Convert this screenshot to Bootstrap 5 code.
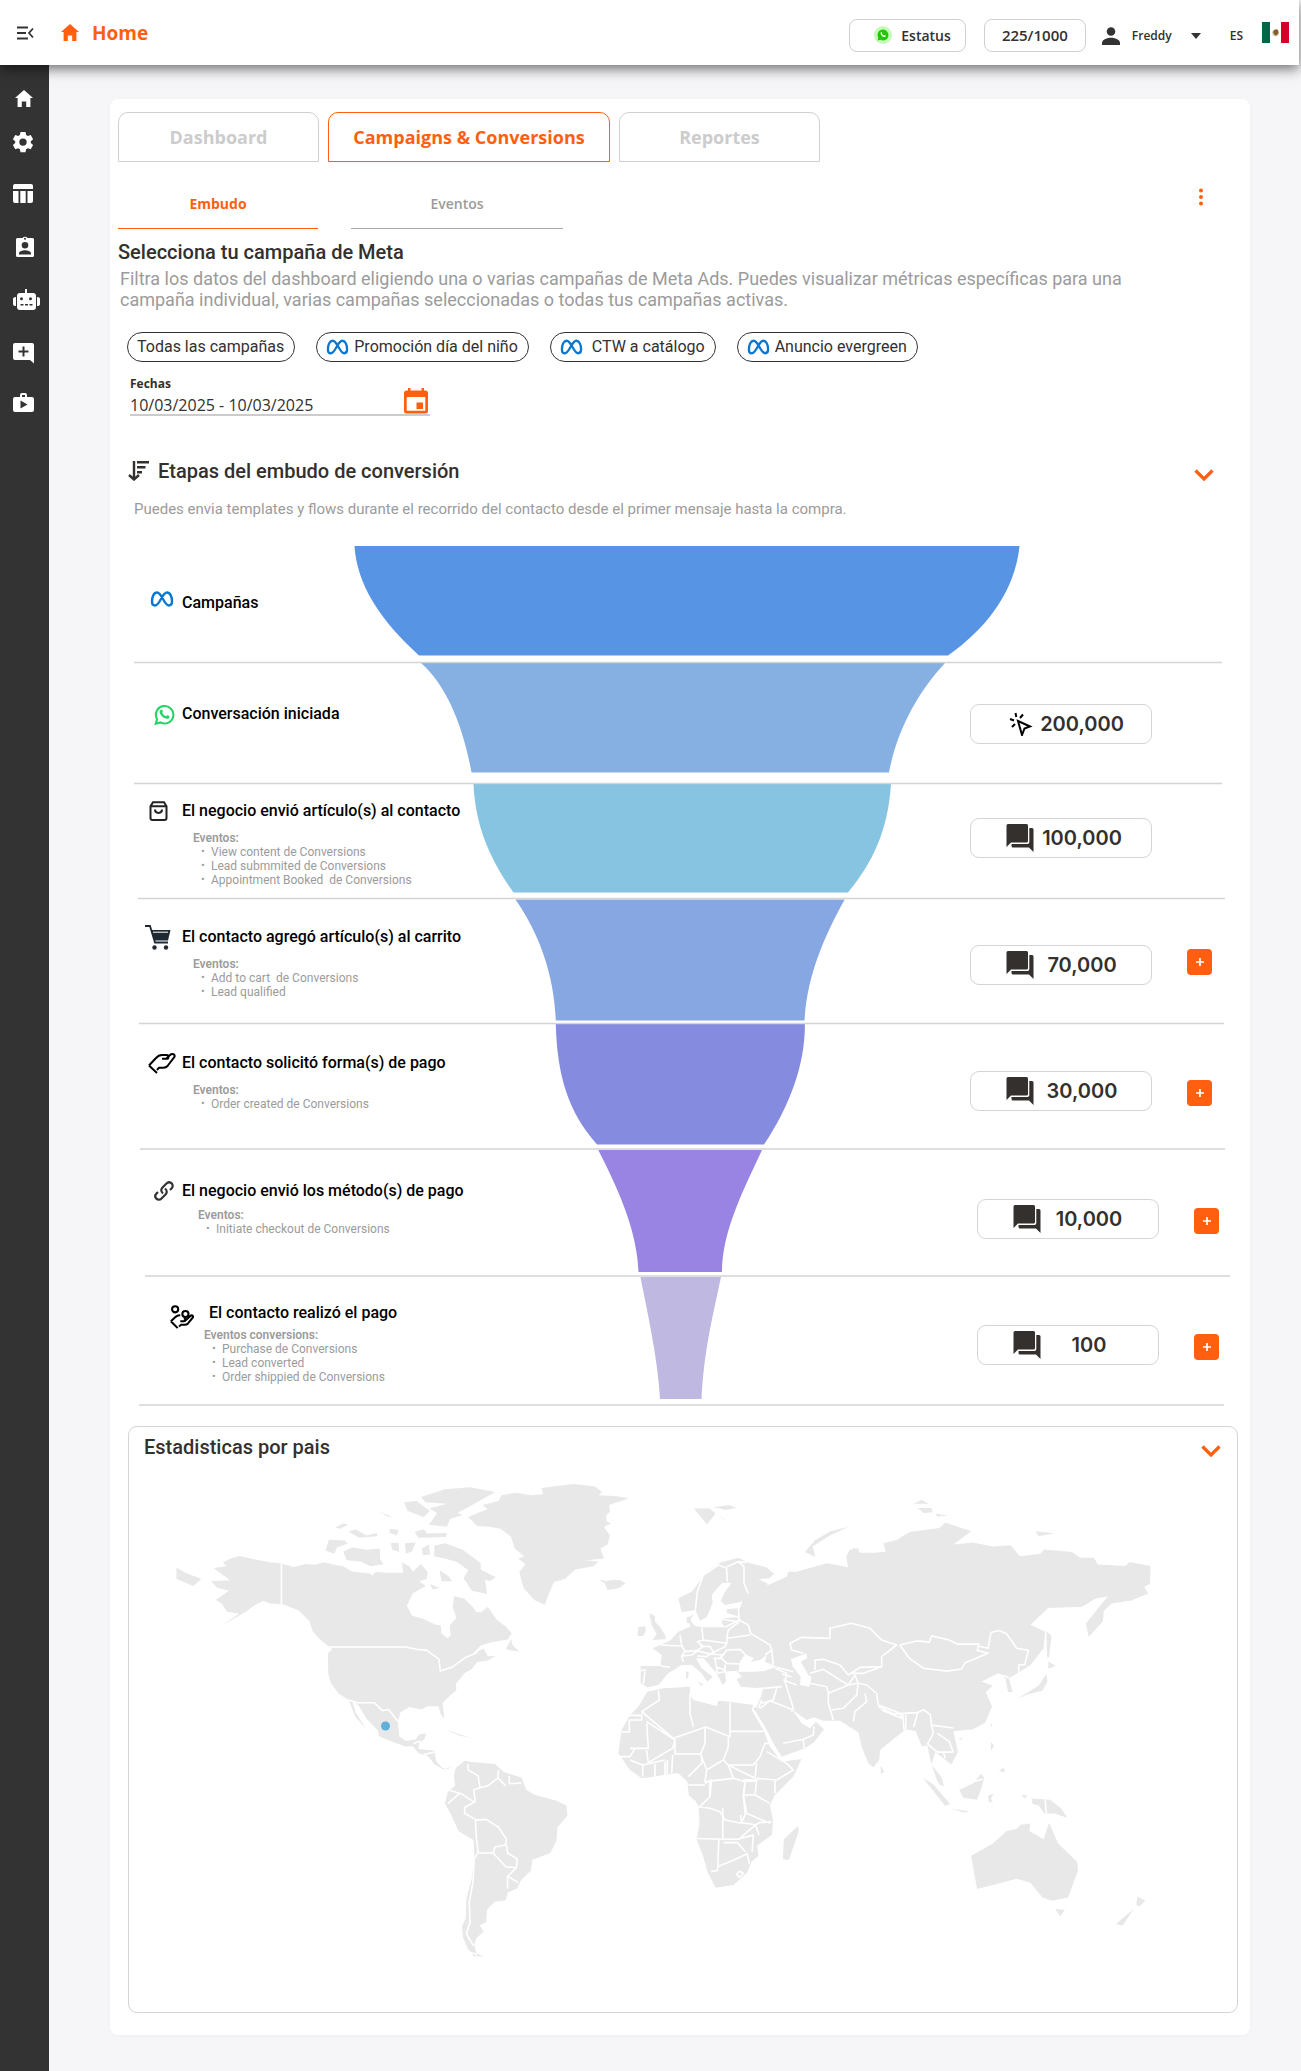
<!DOCTYPE html>
<html lang="es">
<head>
<meta charset="utf-8">
<meta name="viewport" content="width=device-width, initial-scale=1">
<title>Home</title>
<link href="https://cdn.jsdelivr.net/npm/bootstrap@5.3.0/dist/css/bootstrap.min.css" rel="stylesheet">
<style>
:root{--brand:#ff5f0f;--ink:#33302e;--muted:#9b9b9b;--line:#d4d4d4}
body{background:#f6f6f9;font-family:Roboto,"Open Sans",sans-serif;color:var(--ink)}
.os{font-family:"Open Sans",sans-serif}
svg{display:block;flex:none}
.topbar{height:65px;background:#fff;box-shadow:0 4px 12px rgba(0,0,0,.55);position:relative;z-index:2;padding:0 10px 0 15px;margin-right:2px}
.topbar button{background:none;border:0;padding:0;color:inherit}
.topbar .brand-title{font-size:19px;font-weight:700;line-height:26px;color:var(--brand);text-decoration:none;gap:11px}
.topbar .pillbox{height:33px;border:1px solid #d0d0d0;border-radius:8px;font-size:14px;font-weight:600;margin-top:5px}
.pill-status{width:117px;padding-right:14px!important}
.topbar .pill-count{width:102px;font-size:15px;margin-left:18px}
.user-btn{font-size:12px;font-weight:600;margin-top:6px}
.user-btn .avatar{margin-right:12px}
.sidebar{width:49px;background:#333;padding-top:22px;flex:none}
.sidebar a{display:block;color:#fff}
.sidebar ul{padding-left:11px}
.sidebar li{padding-bottom:29px}
.sidebar li:first-child{padding-bottom:19px}
.sidebar li:nth-child(2){padding-bottom:28px}
.sidebar li:nth-child(6){padding-bottom:27px}
.content{padding:34px 51px 37px 61px;min-width:0}
.panel{background:#fff;border-radius:8px;padding:13px 9px 22px 8px;box-shadow:0 1px 4px rgba(0,0,0,.03)}
.maintabs{gap:9px}
.maintabs .nav-link{height:50px;width:201px;border:1px solid #d0d0d0;border-radius:10px 10px 0 0;color:#ccc;font-size:18px;font-weight:700;padding:0;background:#fff}
.maintabs .nav-link.active{width:282px;border-color:var(--brand);color:var(--brand)}
.subtabs{gap:33px;padding-top:27px}
.subtabs .nav-link{width:200px;height:40px;padding:4px 0 0;border-radius:0;border-bottom:1px solid #a8a8a8;color:var(--muted);font-size:14px;font-weight:600;display:flex;justify-content:center}
.subtabs .nav-item+.nav-item .nav-link{width:212px}
.subtabs .nav-link.active{border-color:var(--brand);color:var(--brand);font-weight:700}
.iconbtn{background:none;border:0;padding:0;color:var(--brand)}
.kebab{margin:26px 37px 0 0}
h1,h2{font-size:20px;line-height:24px;font-weight:500;margin:0}
.intro{padding-top:11px}
.intro p{font-size:18px;line-height:21px;color:var(--muted);margin:4px 0 0 2px;max-width:1040px}
.chips{gap:21px;padding:22px 0 0 9px}
.chip{height:30px;border:1px solid #333;border-radius:15px;background:#fff;font-size:16px;line-height:20px;padding:0 10px 0 9px;color:var(--ink);gap:5px}
.dates{width:300px;margin:14px 0 0 12px;border-bottom:2px solid #ccc}
.dates label{font-size:12px;line-height:16px;font-weight:700;display:block}
.dates input{border:0;padding:4px 0 0;font-size:16px;line-height:18px;height:22px;width:200px;color:var(--ink);outline:0}
.dates .caln{margin:-14px 2px 0 0}
.stagehead{padding:43px 27px 0 10px}
.stagesub{font-size:15px;line-height:20px;color:var(--muted);margin:16px 0 27px 16px}
.funnel{display:grid;margin:0 7px 0 12px}
.funnel>*{grid-area:1/1}
.funnel>svg{width:100%;height:100%}
.stages{list-style:none;margin:0;padding:0}
.stage{display:flex;justify-content:space-between}
.stage h3{font-size:16px;line-height:20px;font-weight:500;color:#000;margin:0}
.stage .ico{width:32px;height:24px;display:flex;align-items:center;justify-content:center;flex:none}
.stage .lab{display:flex;align-items:center;gap:4px;padding-left:16px}
.stage .ev{font-size:12px;line-height:14px;color:var(--muted);padding-left:63px;margin-top:8px}
.stage .ev ul{margin:0;padding:0;list-style:none}
.stage .ev li{padding-left:18px;position:relative;white-space:pre}
.stage .ev li::before{content:"•";position:absolute;left:8px;font-size:11px}
.stage .ev strong{font-weight:600;display:block}
.s1{height:117px;padding-top:45px}.s2{height:121px;padding-top:39px}.s3{height:115px;padding-top:15px}
.s4{height:125px;padding-top:26px}.s5{height:126px;padding-top:27px}.s6{height:127px;padding-top:29px}.s7{height:129px;padding-top:24px}
.stage.s6 .ev{padding-left:68px;margin-top:5px}
.stage.s7 .lab{padding-left:36px;gap:11px}.stage.s7 .ev{padding-left:74px;margin-top:3px}
.acts{display:flex;align-items:flex-start;gap:35px;padding-right:82px}
.acts.plus{padding-right:22px}
.figure-pill{width:182px;height:40px;border:1px solid var(--line);border-radius:9px;background:#fff;display:flex;align-items:center;padding-left:35px;gap:5px;font-family:Inter,sans-serif;font-weight:600;font-size:20px}
.figure-pill svg{width:28px}
.figure-pill span{width:86px;text-align:center}
.s2 .figure-pill{margin-top:2px}
.s4 .figure-pill,.s5 .figure-pill,.s6 .figure-pill{margin-top:20px}
.s3 .figure-pill{margin-top:19px}.s7 .figure-pill{margin-top:24px}
.addbtn{width:25px;height:26px;border:0;border-radius:4px;background:var(--brand);color:#fff;padding:0;display:flex;align-items:center;justify-content:center;margin-top:29px}
.s4 .addbtn{margin-top:24px}.s7 .addbtn{margin-top:33px}
.s6 .acts.plus,.s7 .acts.plus{padding-right:15px}
.mapcard{border:1px solid var(--line);border-radius:9px;margin:20px 3px 0 10px;padding:8px 16px 42px 15px}
.mapcard svg.world{width:100%;height:auto;margin-top:17px}
.world .b{fill:none;stroke:#fff;stroke-width:1.6;stroke-linejoin:round}
.world path{vector-effect:non-scaling-stroke}
</style>
<script src="https://cdn.jsdelivr.net/npm/bootstrap@5.3.0/dist/js/bootstrap.bundle.min.js"></script>
</head>
<body>
<svg width="0" height="0" class="position-absolute" aria-hidden="true">
<defs>
<symbol id="home" viewBox="0 0 18 17"><path d="M9 0 0 8h2.600v9h4.200v-5.500h4.400V17h4.200V8H18z" fill="currentColor"/></symbol>
<symbol id="meta" viewBox="0 0 24 16"><path d="M2 10.500C2 5.500 4 1.500 7 1.500c5 0 7 13 12 13 2.200 0 3-1.800 3-4.200C22 5.500 20 1.500 17 1.500c-5 0-7 13-12 13-2.200 0-3-1.800-3-4" fill="none" stroke="#0a78d0" stroke-width="2.400"/></symbol>
<symbol id="chat" viewBox="0 0 28 28"><path d="M2 0h18.500a1.500 1.500 0 0 1 1.500 1.500V17a1.500 1.500 0 0 1-1.500 1.500H5L.5 23V1.500A1.500 1.500 0 0 1 2 0z" fill="#33302e"/><path d="M23.300 4H26a1.500 1.500 0 0 1 1.500 1.500V28L23 23.500H7A1.500 1.500 0 0 1 5.500 22v-2h16a1.800 1.800 0 0 0 1.800-1.800z" fill="#33302e"/></symbol>
<symbol id="chev" viewBox="0 0 20 13"><path d="m1.500 1.500 8.500 8.500 8.500-8.500" fill="none" stroke="currentColor" stroke-width="3.200"/></symbol>
<symbol id="plus" viewBox="0 0 10 10"><path d="M5 1v8M1 5h8" stroke="#fff" stroke-width="1.700"/></symbol>
<symbol id="palm" viewBox="0 0 28 22"><path d="M1 13.500 8 6c2-2.300 3.500-3 6-3h4.500c2.600 0 2.600 3.800 0 3.800H14M18.500 6.500 22 3c2-1.800 5.500-1 4.500 1.800L19.500 14c-1 1.200-2 1.700-4 1.700h-4.500L9 18M1 13.500l8 7.500" fill="none" stroke="#000" stroke-width="2"/></symbol>
</defs></svg>

<header class="topbar d-flex align-items-center os">
  <button type="button" aria-label="Contraer menú"><svg width="20" height="14" viewBox="0 0 20 14"><path d="M2 1.500h11M2 7h9M2 12.500h11M18 2.500 14 7l4 4.500" fill="none" stroke="#333" stroke-width="1.800"/></svg></button>
  <a href="#" class="brand-title d-flex align-items-center ms-4"><svg width="22" height="17"><use href="#home"/></svg><span>Home</span></a>
  <div class="d-flex align-items-center ms-auto">
    <button type="button" class="pillbox pill-status d-flex align-items-center justify-content-end"><svg class="me-2" width="20" height="20" viewBox="0 0 20 20"><circle cx="10" cy="10" r="9" fill="#c4fbb8"/><path d="M10 4.500a5.500 5.500 0 1 1-2.700 10.300L4.500 15.500l.8-2.800A5.500 5.500 0 0 1 10 4.500z" fill="#21c800"/><path d="M7.700 7.500c.3-.8 1-.8 1.300 0 .4.900-.3 1 .1 1.600.4.700 1 1.200 1.700 1.500.5.200.6-.7 1.200-.4 1.200.5 1 .9.600 1.400-.9 1-2.600.2-3.500-.6-1.100-1-1.900-2.500-1.400-3.500z" fill="#fff"/></svg>Estatus</button>
    <div class="pillbox pill-count d-flex align-items-center justify-content-center">225/1000</div>
    <button type="button" class="user-btn d-flex align-items-center ms-3"><svg class="avatar" width="18" height="18" viewBox="0 0 16 16"><circle cx="8" cy="4" r="3.800" fill="#333"/><path d="M0 16v-2c0-3 5-4.500 8-4.500s8 1.500 8 4.500v2z" fill="#333"/></svg>Freddy<svg class="ms-3" width="18" height="8" viewBox="2 0 18 8"><path d="M5 1h10l-5 6z" fill="#333"/></svg></button>
    <button type="button" class="user-btn ms-4">ES</button>
    <svg class="ms-3" width="30" height="21" viewBox="-3 0 30 21"><rect width="27" height="21" fill="#fff"/><rect width="8" height="21" fill="#006847"/><rect x="19" width="8" height="21" fill="#d80027"/><circle cx="13.500" cy="11" r="3.400" fill="#cfd6b8"/><path d="M11 10q2-4 5-2l.5 3-2 2.500-2-.5z" fill="#8a5a2b"/></svg>
  </div>
</header>

<div class="d-flex">
<nav class="sidebar" aria-label="Menú principal"><ul class="list-unstyled mb-0">
  <li><a href="#" aria-label="Inicio"><svg width="24" height="24" viewBox="0 0 24 24"><path d="M13 3 4 11h2.600v9h4.200v-5.500h4.400V20h4.200v-9H22z" fill="currentColor"/></svg></a></li>
  <li><a href="#" aria-label="Ajustes"><svg width="24" height="24" viewBox="0 0 24 24"><path fill="currentColor" fill-rule="evenodd" d="m9.500 2 5 0 .6 3 1.700 1 2.900-1 2.400 4.200-2.300 2v1.800l2.300 2-2.400 4.200-2.900-1-1.700 1-.6 3h-5l-.6-3-1.700-1-2.900 1L1.900 15l2.300-2v-1.800l-2.300-2L4.300 5l2.900 1 1.700-1zM12 8.400a3.700 3.700 0 1 0 0 7.400 3.700 3.700 0 0 0 0-7.400z"/></svg></a></li>
  <li><a href="#" aria-label="Tablas"><svg width="24" height="24" viewBox="0 0 24 24"><path fill="currentColor" d="M4 2h16a2 2 0 0 1 2 2v3H2V4a2 2 0 0 1 2-2zM2 9h5.500v12H4a2 2 0 0 1-2-2zM9.300 9h5.400v12H9.300zM16.500 9H22v10a2 2 0 0 1-2 2h-3.500z"/></svg></a></li>
  <li><a href="#" aria-label="Contactos"><svg width="28" height="24" viewBox="-1 0 28 24"><path fill="currentColor" fill-rule="evenodd" d="M5.500 3h5a3 3 0 0 1 5 0h5a1.500 1.500 0 0 1 1.500 1.500v16a1.500 1.500 0 0 1-1.500 1.500h-15A1.500 1.500 0 0 1 4 20.500v-16A1.500 1.500 0 0 1 5.500 3zM13 2.700a1 1 0 1 0 0 2 1 1 0 0 0 0-2zM13 7a3.300 3.300 0 1 0 0 6.600A3.300 3.300 0 0 0 13 7zM7 19.500h12v-1.200c0-2-3.500-3-6-3s-6 1-6 3z"/></svg></a></li>
  <li><a href="#" aria-label="Bots"><svg width="30" height="24" viewBox="0 0 30 24"><path fill="currentColor" fill-rule="evenodd" d="M14 1h2v4h6a3 3 0 0 1 3 3v11a3 3 0 0 1-3 3H9a3 3 0 0 1-3-3V8a3 3 0 0 1 3-3h5zM10.500 9.300a1.500 1.500 0 1 0 0 3 1.500 1.500 0 0 0 0-3zm9 0a1.500 1.500 0 1 0 0 3 1.500 1.500 0 0 0 0-3zM9.500 16v1.500h3V16zm4.500 0v1.500h3V16zm4.500 0v1.500h3V16zM2 11q0-2 3-2v9q-3 0-3-2zM26 9q3 0 3 2v5q0 2-3 2z"/></svg></a></li>
  <li><a href="#" aria-label="Nuevo mensaje"><svg width="25" height="24" viewBox="0 0 25 24"><path fill="currentColor" fill-rule="evenodd" d="M4 2h17a2 2 0 0 1 2 2v18.500L19 19H4a2 2 0 0 1-2-2V4a2 2 0 0 1 2-2zM11.500 5.500v4h-4v2h4v4h2v-4h4v-2h-4v-4z"/></svg></a></li>
  <li><a href="#" aria-label="Portafolio"><svg width="25" height="24" viewBox="0 0 25 24"><path fill="currentColor" fill-rule="evenodd" d="M9 5V3a2 2 0 0 1 2-2h3a2 2 0 0 1 2 2v2h5a2 2 0 0 1 2 2v11a2 2 0 0 1-2 2H4a2 2 0 0 1-2-2V7a2 2 0 0 1 2-2zm2 0h3V3h-3zM9.500 8.500v8l7-4z"/></svg></a></li>
</ul></nav>

<main class="content flex-grow-1">
<section class="panel">
  <ul class="nav maintabs os">
    <li class="nav-item"><button type="button" class="nav-link">Dashboard</button></li>
    <li class="nav-item"><button type="button" class="nav-link active">Campaigns &amp; Conversions</button></li>
    <li class="nav-item"><button type="button" class="nav-link">Reportes</button></li>
  </ul>
  <div class="d-flex justify-content-between">
    <ul class="nav subtabs os">
      <li class="nav-item"><a href="#" class="nav-link active">Embudo</a></li>
      <li class="nav-item"><a href="#" class="nav-link">Eventos</a></li>
    </ul>
    <button type="button" class="iconbtn kebab align-self-start" aria-label="Más opciones"><svg width="6" height="18" viewBox="0 0 6 18"><circle cx="3" cy="2.500" r="2" fill="currentColor"/><circle cx="3" cy="9" r="2" fill="currentColor"/><circle cx="3" cy="15.500" r="2" fill="currentColor"/></svg></button>
  </div>
  <div class="intro">
    <h1>Selecciona tu campaña de Meta</h1>
    <p>Filtra los datos del dashboard eligiendo una o varias campañas de Meta Ads. Puedes visualizar métricas específicas para una campaña individual, varias campañas seleccionadas o todas tus campañas activas.</p>
  </div>
  <div class="chips d-flex flex-wrap">
    <button type="button" class="chip">Todas las campañas</button>
    <button type="button" class="chip d-flex align-items-center"><svg width="23" height="16"><use href="#meta"/></svg>Promoción día del niño</button>
    <button type="button" class="chip d-flex align-items-center"><svg class="me-1" width="23" height="16"><use href="#meta"/></svg>CTW a catálogo</button>
    <button type="button" class="chip d-flex align-items-center"><svg width="23" height="16"><use href="#meta"/></svg>Anuncio evergreen</button>
  </div>
  <div class="dates os">
    <label for="fechas">Fechas</label>
    <div class="d-flex justify-content-between align-items-end">
      <input id="fechas" type="text" value="10/03/2025 - 10/03/2025">
      <button type="button" class="iconbtn caln" aria-label="Abrir calendario"><svg width="24" height="26" viewBox="0 0 24 26"><path fill="currentColor" fill-rule="evenodd" d="M4 0h2.500v2.500h11V0H20v2.500h1.500A2.500 2.500 0 0 1 24 5v18a2.500 2.500 0 0 1-2.500 2.500h-19A2.500 2.500 0 0 1 0 23V5a2.500 2.500 0 0 1 2.500-2.500H4zM2.700 9v13.800h18.600V9zm9.800 5.500h6.500v6.500h-6.500z"/></svg></button>
    </div>
  </div>

  <div class="stagehead d-flex align-items-center">
    <svg class="me-2" width="22" height="20" viewBox="0 0 22 20"><path d="M6 0v18M1 14l5 4.500 5-4.500M9 1.200h12M9 6.200h8.500M9 11.200h5" fill="none" stroke="#33302e" stroke-width="2.400"/></svg>
    <h2>Etapas del embudo de conversión</h2>
    <button type="button" class="iconbtn ms-auto" aria-label="Contraer etapas"><svg class="mt-2" width="20" height="13"><use href="#chev"/></svg></button>
  </div>
  <p class="stagesub">Puedes envia templates y flows durante el recorrido del contacto desde el primer mensaje hasta la compra.</p>

  <div class="funnel">
    <svg viewBox="130 546 1104 860" preserveAspectRatio="none" aria-hidden="true">
      <path fill="#5894e4" d="M354.500 546C357 585 380 620 419 655.500H948C988 627 1015 590 1019.500 546z"/>
      <path fill="#86b0e2" d="M421 663C446 685 463 725 471.500 772.500H889C897 730 918 692 945 663z"/>
      <path fill="#86c4e2" d="M473.500 784C475 825 490 860 513.500 892.500H848C873 862 888 830 891 784z"/>
      <path fill="#86a7e2" d="M515.500 899.500C540 935 554 975 555.800 1020.500H804.500C807 975 825 935 844.700 899.500z"/>
      <path fill="#858ce0" d="M555.800 1024C557 1075 568 1112 597 1144.500H764C790 1105 805 1065 804.900 1024z"/>
      <path fill="#9984e3" d="M598.300 1150C616 1185 637 1228 638.500 1272H722C722 1230 745 1187 762 1150z"/>
      <path fill="#bfb8e0" d="M640.400 1277C648 1315 658 1360 660 1399H701.500C704 1350 713 1315 721 1277z"/>
      <path stroke="#cfcfcf" stroke-opacity=".9" stroke-width="1.500" d="M134 662.500H1222M134 783.500H1222M138 898.500H1225M139 1023.500H1224M140 1149H1225M145 1276H1230M139 1405H1224"/>
    </svg>
    <ol class="stages">
      <li class="stage s1"><div><div class="lab"><span class="ico"><svg class="mb-2" width="24" height="16"><use href="#meta"/></svg></span><h3>Campañas</h3></div></div></li>
      <li class="stage s2"><div><div class="lab"><span class="ico ps-1"><svg width="21" height="21" viewBox="0 0 24 24"><path d="M2 22.500l1.500-5.200A10 10 0 1 1 7.300 21z" fill="none" stroke="#25d366" stroke-width="2.400"/><path d="M8 6.500c1-.7 1.500 0 2 1.500.6 1.500-1 1.500-.3 2.600 1 1.700 2 2.500 3.600 3.200 1 .4 1.200-1.400 2.200-1 2.500 1 2.500 1.200 2.200 2.200-.5 1.600-2.700 2-4.200 1.600-3.300-1-5.800-3.400-6.900-6.300C6 8.800 6.800 7.300 8 6.500z" fill="#25d366"/></svg></span><h3>Conversación iniciada</h3></div></div>
        <div class="acts"><div class="figure-pill"><svg height="24" viewBox="0 0 28 24"><path d="m12 9 12 5.500-5.500 2L16 23zM9.500 1l.8 4M17 2.500l-3 3.500M4 7l4 1.500M6 15l3-3" fill="none" stroke="#000" stroke-width="2"/></svg><span>200,000</span></div></div></li>
      <li class="stage s3"><div><div class="lab"><span class="ico pe-2"><svg width="19" height="20" viewBox="0 0 19 20"><path d="M4 1.200h11l2.500 4V17a2 2 0 0 1-2 2H3.500a2 2 0 0 1-2-2V5.200zM1.500 5.200h16M6 8.500c0 4.500 7 4.500 7 0" fill="none" stroke="#222" stroke-width="2"/></svg></span><h3>El negocio envió artículo(s) al contacto</h3></div><div class="ev"><strong>Eventos:</strong><ul><li>View content de Conversions</li><li>Lead submmited de Conversions</li><li>Appointment Booked  de Conversions</li></ul></div></div>
        <div class="acts"><div class="figure-pill"><svg height="28"><use href="#chat"/></svg><span>100,000</span></div></div></li>
      <li class="stage s4"><div><div class="lab"><span class="ico pe-2"><svg width="26" height="25" viewBox="0 0 26 25"><path d="M0 1h5l5 16.500h13" fill="none" stroke="#1f2933" stroke-width="1.800"/><path d="M6 5h19.500l-2.500 10.500H9.500z" fill="#1f2933"/><path d="M8 7.200h15" stroke="#fff" stroke-width="1"/><circle cx="9.500" cy="22.500" r="2.200" fill="#1f2933"/><circle cx="21" cy="22.500" r="2.200" fill="#1f2933"/></svg></span><h3>El contacto agregó artículo(s) al carrito</h3></div><div class="ev"><strong>Eventos:</strong><ul><li>Add to cart  de Conversions</li><li>Lead qualified</li></ul></div></div>
        <div class="acts plus"><div class="figure-pill"><svg height="28"><use href="#chat"/></svg><span>70,000</span></div><button type="button" class="addbtn" aria-label="Agregar"><svg width="10" height="10"><use href="#plus"/></svg></button></div></li>
      <li class="stage s5"><div><div class="lab"><span class="ico"><svg width="28" height="22"><use href="#palm"/></svg></span><h3>El contacto solicitó forma(s) de pago</h3></div><div class="ev"><strong>Eventos:</strong><ul><li>Order created de Conversions</li></ul></div></div>
        <div class="acts plus"><div class="figure-pill"><svg height="28"><use href="#chat"/></svg><span>30,000</span></div><button type="button" class="addbtn" aria-label="Agregar"><svg width="10" height="10"><use href="#plus"/></svg></button></div></li>
      <li class="stage s6"><div><div class="lab"><span class="ico ps-1"><svg width="20" height="20" viewBox="0 0 20 20"><path d="M9 12.500C6.500 10.500 7 8 8.500 6.500l4-4C16-1 21 4 17.500 7.500l-1.500 1.500M11 7.500c2.500 2 2 4.500.5 6l-4 4C4 21-1 16 2.500 12.500L4 11" fill="none" stroke="#333" stroke-width="2.200"/></svg></span><h3>El negocio envió los método(s) de pago</h3></div><div class="ev"><strong>Eventos:</strong><ul><li>Initiate checkout de Conversions</li></ul></div></div>
        <div class="acts plus"><div class="figure-pill"><svg height="28"><use href="#chat"/></svg><span>10,000</span></div><button type="button" class="addbtn" aria-label="Agregar"><svg width="10" height="10"><use href="#plus"/></svg></button></div></li>
      <li class="stage s7"><div><div class="lab"><span class="ico pt-2"><svg width="24" height="24" viewBox="0 0 28 28"><g fill="none" stroke="#000" stroke-width="2.400"><circle cx="6" cy="5" r="3.600"/><circle cx="18" cy="10.500" r="3.600"/><path d="m1 19 6-5.500c2-1.500 3-1.500 5-1.500M12 19h4c2.500 0 2.500-3.500 0-3.500M18 18l6-5.500c2-1 3.500.5 2.500 2.300L21 21.500c-1 1-2 1.500-4 1.500h-4l-2.500 2M1 19l8 8"/></g></svg></span><h3>El contacto realizó el pago</h3></div><div class="ev"><strong>Eventos conversions:</strong><ul><li>Purchase de Conversions</li><li>Lead converted</li><li>Order shippied de Conversions</li></ul></div></div>
        <div class="acts plus"><div class="figure-pill"><svg height="28"><use href="#chat"/></svg><span>100</span></div><button type="button" class="addbtn" aria-label="Agregar"><svg width="10" height="10"><use href="#plus"/></svg></button></div></li>
    </ol>
  </div>

  <section class="mapcard">
    <div class="d-flex justify-content-between align-items-center"><h2>Estadisticas por pais</h2><button type="button" class="iconbtn" aria-label="Contraer estadísticas"><svg class="mt-2" width="20" height="13"><use href="#chev"/></svg></button></div>
    <svg class="world" viewBox="144 1476 1077 494" role="img" aria-label="Mapa mundial">
      <g fill="#e8e8e8">
      <!-- América y Groenlandia -->
      <g transform="translate(120 1420) scale(.35714 .39541)">
        <path d="M262 374 298 370 288 360 310 350 335 344 378 353 420 360 450 362 487 372 520 364 545 366 572 360 600 366 625 370 650 383 700 388 706 394 716 384 745 386 793 386 790 360 812 372 820 384 842 364 862 385 858 402 838 408 856 420 820 438 803 470 818 495 850 503 882 517 898 520 900 540 917 552 926 545 923 520 942 500 932 475 935 446 965 452 990 475 996 485 1010 487 1030 472 1055 505 1080 522 1097 540 1085 555 1040 562 1010 570 985 594 1018 578 1030 598 1052 596 1030 608 1000 612 985 630 965 640 940 668 942 683 903 715 908 755 898 745 892 724 860 724 845 732 810 726 785 740 778 765 782 800 800 812 828 808 838 795 858 793 852 808 838 815 836 832 880 836 885 862 900 878 915 884 932 876 905 884 880 870 862 850 835 842 820 825 800 826 765 815 725 800 722 785 690 755 668 722 650 710 660 740 690 782 660 752 640 708 612 692 590 665 583 640 582 590 594 580 560 555 540 535 530 508 500 482 485 476 455 466 420 464 400 457 375 470 350 486 285 520 333 490 300 485 285 465 268 455 305 432 272 424 255 408 308 405z"/>
        <path d="M975 245 1030 225 1015 215 1060 205 1068 190 1110 184 1150 190 1185 188 1180 172 1270 162 1330 168 1350 182 1340 190 1385 192 1425 198 1370 215 1372 232 1362 240 1362 256 1375 262 1355 270 1372 292 1365 315 1345 325 1355 350 1305 355 1340 358 1325 370 1275 378 1245 402 1215 410 1200 440 1190 467 1160 455 1130 425 1118 385 1135 365 1115 350 1132 345 1105 325 1095 295 1065 275 1035 270 1000 268z"/>
        <path d="M795 208 830 205 868 230 850 245 805 230zM843 195 910 175 980 170 1050 182 1000 208 945 235 960 240 925 250 915 270 865 265 888 235 866 224 915 212 855 208zM602 272 625 262 640 264 615 275zM640 282 660 276 690 292 720 285 720 294 670 298zM725 232 765 245 750 244zM755 275 780 278 775 292 755 285zM825 283 850 276 860 287 915 286 912 296 835 298zM575 330 585 303 630 305 637 313 608 322 600 338zM625 333 650 322 690 328 728 325 728 350 738 365 700 370 675 358 635 355zM758 312 780 310 782 334 762 328zM798 312 828 310 818 332 800 338zM845 325 865 315 868 340 848 342zM880 318 910 312 960 328 1010 362 1010 378 1052 398 1035 408 1022 404 1028 440 985 432 962 400 975 380 945 360 910 350 880 345zM895 380 920 395 930 408 900 408zM868 415 895 425 875 428zM158 373 185 387 228 402 205 420 158 402zM1095 555 1100 570 1118 586 1080 580zM905 780 950 795 985 805 950 798zM1355 408 1385 404 1415 412 1400 424 1365 430zM1342 404 1358 406 1355 412z"/>
        <path d="M965 862 940 880 935 900 938 925 918 940 910 970 928 1000 948 1040 990 1062 992 1100 985 1160 970 1210 968 1260 958 1280 960 1308 975 1340 1000 1356 992 1328 998 1310 1018 1294 1008 1278 1025 1270 1028 1238 1050 1218 1080 1215 1086 1195 1112 1185 1122 1165 1150 1140 1155 1112 1205 1095 1222 1065 1225 1030 1253 1000 1250 975 1220 962 1160 948 1138 935 1125 905 1075 890 1050 870 985 865zM985 1345 1018 1356 990 1356z"/>
      </g>
      <!-- Europa, norte de África y Oriente Medio -->
      <g transform="translate(610 1530) scale(.33333)">
        <path d="M205 205 245 185 272 150 290 125 330 98 385 83 415 98 470 112 492 132 478 145 445 148 472 160 462 178 440 165 425 165 415 190 395 215 345 225 332 213 345 185 365 158 335 160 305 195 308 220 290 262 270 272 256 240 215 247z"/>
        <path d="M395 215 385 235 350 238 352 252 380 262 340 265 335 278 345 292 275 292 255 288 235 265 252 250 240 270 240 290 205 305 180 332 150 345 128 355 155 375 152 408 92 408 92 460 112 472 145 465 175 430 215 405 245 405 275 430 292 455 308 440 275 415 258 385 280 385 320 430 338 465 348 455 345 425 380 422 395 440 380 448 392 470 440 474 460 472 455 495 440 530 430 535 465 590 490 640 515 680 585 655 612 637 642 598 618 575 600 595 575 580 548 540 590 570 610 562 640 572 700 572 720 592 735 585 745 605 755 650 775 700 790 712 808 690 810 660 880 600 900 590V8L860 30 820 40 830 65 760 72 765 110 790 105 765 120 745 145 722 140 735 115 750 90 745 55 718 60 710 85 715 112 650 100 560 125 535 125 530 140 480 165 420 155z"/>
        <path d="M118 250 135 258 135 275 150 290 168 320 165 328 128 330 140 312 125 285zM85 292 105 288 108 300 100 318 82 318zM0 152 30 150 45 160 25 175 0 178zM230 262 245 258 240 280 230 280zM262 455 280 462 275 468zM228 425 236 425 235 445 228 445z"/>
        <path d="M112 485 160 475 240 470 240 495 250 510 320 528 325 512 360 515 430 525 425 540 460 600 480 650 515 695 575 687 550 740 495 795 480 825 488 900H270L265 820 237 797 232 755 205 730 180 732 130 740 95 745 60 720 25 670 35 600 60 555 85 530zM812 708 822 725 813 732z"/>
      </g>
      <!-- Asia, sur de África y Oceanía -->
      <g transform="translate(680 1420) scale(.39604 .41511)">
        <path d="M160 420 205 405 240 390 300 365 380 350 425 360 420 325 440 308 455 320 520 320 515 300 552 294 558 282 580 270 655 260 670 247 735 268 690 300 740 295 790 305 835 302 858 328 910 322 920 312 990 318 1010 332 1045 332 1055 348 1125 352 1135 342 1188 352 1187 395 1172 402 1182 418 1140 435 1090 442 1070 460 1068 485 1032 523 1025 490 1050 460 1080 425 1050 430 1015 450 930 453 885 493 922 510 918 550 885 590 855 608 830 622 840 655 828 655 822 622 800 612 762 630 790 640 772 655 788 690 770 730 740 745 690 750 702 800 685 830 665 815 645 800 635 830 660 860 665 882 650 870 632 820 625 785 610 785 595 750 570 745 505 795 490 838 470 810 455 755 430 740 400 722 330 600 230 550 160 480z"/>
        <path d="M48 905 40 920 50 935 52 960 42 1010 58 1050 70 1090 90 1127 135 1120 170 1090 180 1065 198 1050 195 1025 232 1000 235 965 225 920 235 905zM298 978 300 990 275 1060 260 1058 262 1010z"/>
        <path d="M735 1050 790 1020 825 990 850 985 860 975 885 972 882 990 918 1010 932 970 955 1020 1003 1065 1005 1085 980 1150 940 1158 915 1150 885 1115 850 1105 800 1118 750 1130zM948 1178 972 1180 960 1196zM1155 1148 1175 1158 1160 1172 1152 1168zM1145 1178 1118 1218 1100 1215zM888 912 935 915 962 935 978 958 945 948 920 948 905 928 890 925zM862 902 878 905 870 912zM613 862 640 878 682 925 670 930zM682 935 730 943 720 946zM705 890 740 875 760 852 768 862 760 890 750 915 715 910zM778 905 792 900 785 912 790 922 780 920zM645 857 660 862 667 882 655 878zM507 833 515 848 508 853zM785 775 793 785 785 798zM805 845 818 838 820 850zM703 768 716 765 708 771zM784 730 788 733 785 742zM925 508 938 520 932 572 927 572zM930 582 948 592 930 600zM925 612 928 630 915 652 880 660 850 672 880 655 905 640zM315 318 340 290 380 268 425 257 375 280 335 305 342 330zM35 213 75 213 90 225 68 252zM85 210 125 205 142 212 115 217zM95 228 118 243 108 238zM590 202 610 192 628 202zM600 212 635 212 638 222 615 224zM645 225 675 230 650 233zM898 268 945 273 905 280z"/>
      </g></g>
      <!-- Mares interiores -->
      <g fill="#fff" transform="translate(610 1530) scale(.33333)">
        <path d="M385 425 390 395 405 373 432 385 422 395 450 390 470 375 465 395 500 410 460 424 425 425zM543 388 590 370 592 385 572 395 595 435 605 440 598 470 570 465 572 440 548 410z"/>
      </g>
      <!-- Fronteras -->
      <g class="b">
        <g transform="translate(120 1420) scale(.35714 .39541)">
          <path d="M452 362V466M580 574H800L830 580 858 582 893 605 897 635 930 625 965 602 1000 588M640 708 665 715 712 715 735 735 752 732 778 762M822 818 840 812M850 846 880 840M975 870 975 885 1003 900 1008 930 990 935 995 965 965 980 965 995 995 1010 998 1060 1003 1092 992 1110 988 1170 978 1220 980 1270 970 1300 990 1330M1060 885 1058 905 1030 925 1008 930M1090 900 1090 920 1125 918M1058 905 1080 925M918 935 955 945 990 965M918 970 950 945M995 1012 1025 1010 1060 1030 1082 1060 1080 1075 1050 1080 1045 1095 1003 1095M1082 1075 1085 1095 1112 1110 1110 1132 1080 1130 1045 1095M1110 1132 1085 1155 1085 1185M1088 1155 1115 1170"/>
        </g>
        <g transform="translate(610 1530) scale(.33333)">
          <path d="M256 240 262 185 280 135 325 105 350 115 352 155M350 110 385 95 402 110 402 160 415 190M385 95 410 98M395 215 385 238 388 270 345 292M352 252 385 262M340 268 385 275M388 270 415 285 422 310 480 345 485 360 465 375M350 325 355 300 388 275M350 325 422 315M275 292 280 330 350 340 352 320M210 315 215 345 225 365 260 362 280 350 262 335 280 330M152 345 215 348 225 365 215 378 220 395M260 362 300 372 345 350 350 340M260 365 245 375 215 378M262 378 290 380 310 365 300 350 270 348M300 372 340 375 330 385 310 385M340 375 350 360 390 358 405 373M330 380 350 400 390 402M315 385 322 430M345 403 345 425 322 430M318 410 345 420M152 408 180 412M105 425 100 462M92 422 108 420"/>
          <path d="M145 482 148 510 95 545 190 625 285 592M240 490 240 550 250 590M360 518V620L285 590M362 604H460M35 606H58V570H95V552M55 556H92M110 580 115 655H60M110 575 195 630 188 655 170 665 115 698 110 660M195 628V672H272L285 640 285 592M355 620V650L340 690 290 720 272 672M340 690 355 705H430L450 680 465 640 490 640M355 705 435 745 440 700M290 720 285 755 370 745 355 705M188 675 185 730M165 695V735M172 690V732M135 702V740M98 705V740M60 690 98 705 165 690M25 680H60L75 655M235 740 275 700 275 680M235 765H285M440 745 500 750 550 720 530 700 470 665M495 750V790M400 750 440 750 435 795H400M400 795 405 755 370 745M285 760 305 750 300 800 270 830M435 795 480 820M400 795 410 850 480 880M265 830 300 835 330 845 345 870 395 880 392 855"/>
          <path d="M495 415 530 430 525 455 550 535 545 545M515 470 460 475M500 475 490 510 455 520M450 535 480 512 550 540M445 535 455 510M520 640 580 628 582 655M580 628 610 615 612 590M500 412 550 425M515 432 545 440M520 450 560 465"/>
          <path d="M485 360 490 405M580 370 545 360 540 340 575 322 660 325 660 295 725 280 780 295 815 330 860 345 815 380 815 410 750 412 715 435 690 405 640 388 615 390V420M600 430 640 418 690 450 715 465 745 460 735 435M600 460 650 470 655 490 715 465M655 490 655 520 670 570M665 540 700 535 740 495 745 460M745 460 770 465 800 490 805 525 870 550 875 565 815 540M730 575 735 545 770 515 765 490M725 430 760 430 815 410M715 465 735 435M878 550 882 600"/>
        </g>
        <g transform="translate(680 1420) scale(.39604 .41511)">
          <path d="M555 542 600 532 630 535 635 520 680 530 700 540 755 540 750 555 778 562 720 585 710 600 675 605 615 598 580 575 555 542M755 545 778 550 785 512 805 507 825 515 850 550 880 555 870 590 855 590 855 610M830 620 800 612M500 690 540 708 600 705 615 698 632 710 635 735 690 742M570 710 570 745M600 705 590 740M635 735 640 755 625 780 650 800 690 800M650 755 680 775 690 800M665 800 670 815M922 912 925 948M708 888 745 870 765 865"/>
          <path d="M42 1008 105 1010 150 1010 160 1000 192 975 200 970 232 968M108 935V1008M98 1010 95 1085 78 1088M98 1075 140 1058 170 1045 175 1070M110 1018 145 1018 165 1040M145 1010 185 1000 182 1040M75 905V870M190 870 165 870 160 905 165 950 155 970 190 975 200 1000M143 1094 150 1087 160 1092 150 1102z"/>
        </g>
      </g>
      <circle cx="385.500" cy="1726" r="4.500" fill="#5fb1dc"/>
    </svg>
  </section>
</section>
</main>
</div>
</body>
</html>
